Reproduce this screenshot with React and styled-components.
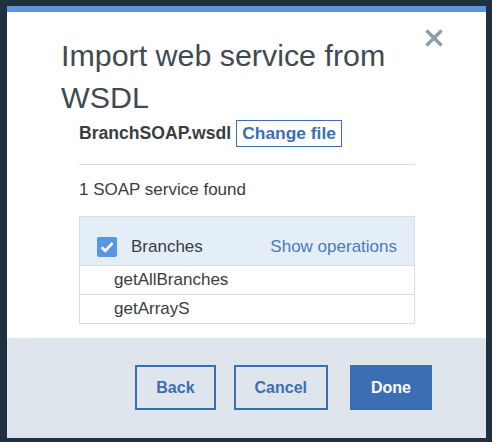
import React from "react";
import styled, { createGlobalStyle } from "styled-components";

const GlobalStyle = createGlobalStyle`
  html, body {
    margin: 0;
    padding: 0;
    background: #1f3140;
  }
  body {
    padding: 6px 6px 5px 7px;
    font-family: "Liberation Sans", Arial, sans-serif;
    color: #3a3d40;
  }
`;

const Dialog = styled.div`
  width: 479px;
  background: #ffffff;
  border-top: 6px solid #5b95e0;
  box-sizing: border-box;
`;

const Header = styled.div`
  display: flex;
  align-items: flex-start;
  padding: 17px 43px 0 54px;
`;

const Title = styled.h1`
  flex: 1;
  margin: 5px 0 0;
  font-size: 30.4px;
  font-weight: 300;
  line-height: 42px;
  color: #414a52;
`;

const CloseButton = styled.button`
  width: 18px;
  height: 18px;
  padding: 0;
  border: 0;
  background: none;
  cursor: pointer;
  display: flex;
  svg {
    display: block;
  }
`;

const Body = styled.div`
  padding: 2px 71px 14px 72px;
`;

const FileRow = styled.div`
  display: flex;
  align-items: center;
  gap: 5px;
`;

const FileName = styled.span`
  font-size: 17.6px;
  font-weight: 700;
  color: #3a3d40;
`;

const ChangeFile = styled.button`
  height: 27px;
  padding: 0 5px;
  border: 1px solid #3c6eb4;
  background: #fff;
  color: #3c6eb4;
  font-family: "Liberation Sans", Arial, sans-serif;
  font-size: 17.4px;
  font-weight: 700;
  box-sizing: border-box;
`;

const Divider = styled.hr`
  margin: 17px 0 0;
  border: 0;
  height: 1px;
  background: #dcdcdc;
`;

const Found = styled.p`
  margin: 15px 0 0;
  font-size: 17px;
  line-height: 20px;
  color: #3a3d40;
`;

const Table = styled.div`
  margin-top: 16px;
  border: 1px solid #dcdcdc;
`;

const TableHeader = styled.div`
  display: flex;
  align-items: center;
  gap: 14px;
  padding: 19px 17px 8px;
  background: #e4eef8;
  font-size: 17px;
  line-height: 21px;
`;

const Check = styled.span`
  width: 20px;
  height: 20px;
  border-radius: 2px;
  background: #5596e6;
  display: flex;
  align-items: center;
  justify-content: center;
`;

const ServiceName = styled.span`
  flex: 1;
  color: #3a3d40;
`;

const ShowOps = styled.a`
  color: #4a7bbd;
  text-decoration: none;
`;

const OpRow = styled.div`
  border-top: 1px solid #dcdcdc;
  height: 28px;
  line-height: 28px;
  padding-left: 34px;
  font-size: 17px;
  color: #3a3d40;
`;

const Footer = styled.div`
  height: 100px;
  box-sizing: border-box;
  background: #dfe5ec;
  padding: 27px 54px 0;
  display: flex;
  justify-content: flex-end;
  align-items: flex-start;
  gap: 18px;
`;

const Button = styled.button`
  height: 45px;
  padding: 0 19px;
  border: 2px solid #3c6eb4;
  background: ${(p) => (p.$primary ? "#3c6eb4" : "transparent")};
  color: ${(p) => (p.$primary ? "#ffffff" : "#3c6eb4")};
  margin-left: ${(p) => (p.$primary ? "4px" : "0")};
  font-family: "Liberation Sans", Arial, sans-serif;
  font-size: 16px;
  font-weight: 700;
  box-sizing: border-box;
`;

export default function App() {
  return (
    <>
      <GlobalStyle />
      <Dialog>
        <Header>
          <Title>Import web service from WSDL</Title>
          <CloseButton aria-label="Close">
            <svg width="18" height="18" viewBox="0 0 18 18">
              <path
                d="M1.5 1.5 L16.5 16.5 M16.5 1.5 L1.5 16.5"
                stroke="#8d9ca7"
                strokeWidth="3.4"
                strokeLinecap="butt"
              />
            </svg>
          </CloseButton>
        </Header>
        <Body>
          <FileRow>
            <FileName>BranchSOAP.wsdl</FileName>
            <ChangeFile>Change file</ChangeFile>
          </FileRow>
          <Divider />
          <Found>1 SOAP service found</Found>
          <Table>
            <TableHeader>
              <Check>
                <svg width="14" height="12" viewBox="0 0 14 12">
                  <path
                    d="M1.5 6.2 L5.2 9.8 L12.5 2"
                    fill="none"
                    stroke="#ffffff"
                    strokeWidth="2.6"
                  />
                </svg>
              </Check>
              <ServiceName>Branches</ServiceName>
              <ShowOps>Show operations</ShowOps>
            </TableHeader>
            <OpRow>getAllBranches</OpRow>
            <OpRow>getArrayS</OpRow>
          </Table>
        </Body>
        <Footer>
          <Button>Back</Button>
          <Button>Cancel</Button>
          <Button $primary>Done</Button>
        </Footer>
      </Dialog>
    </>
  );
}
